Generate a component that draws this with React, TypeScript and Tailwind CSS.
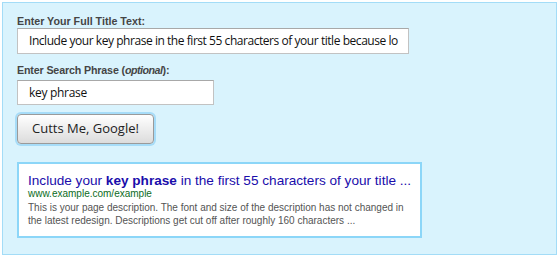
export default function App() {
  return (
    <div className="h-[257px] w-[560px] bg-white p-[2px]">
      <div className="h-[253px] w-[555px] border border-[#a3dcf7] bg-[#d9f3fd] px-[14px] pt-[12px]">
        <label className="block font-['Liberation_Sans',Arial,sans-serif] text-[10.7px] font-bold leading-[13px] text-[#454545]">
          Enter Your Full Title Text:
        </label>
        <div className="flex h-[26px] w-[392px] items-center overflow-hidden whitespace-nowrap border border-[#c2c2c2] border-t-[#a8a8a8] bg-white px-[11px] font-['Open_Sans',sans-serif] text-[12px] tracking-[-0.45px] text-[#111]">
          Include your key phrase in the first 55 characters of your title because lo
        </div>

        <label className="mt-[10px] block font-['Liberation_Sans',Arial,sans-serif] text-[10.7px] font-bold leading-[13px] tracking-[-0.15px] text-[#454545]">
          Enter Search Phrase (<em className="tracking-[-0.5px]">optional</em>):
        </label>
        <div className="mt-[3px] flex h-[25px] w-[197px] items-center border border-[#c2c2c2] border-t-[#a8a8a8] bg-white px-[11px] font-['Open_Sans',sans-serif] text-[12px] tracking-[-0.3px] text-[#111]">
          key phrase
        </div>

        <button className="mt-[9px] flex h-[30px] w-[137px] items-center justify-center rounded-[4px] border border-[#9a9a9a] bg-gradient-to-b from-white to-[#dcdcdc] font-['Open_Sans',sans-serif] text-[13px] text-[#222] shadow-[0_0_0_2px_#a6dcf8]">
          Cutts Me, Google!
        </button>

        <div className="mt-[18px] h-[76px] w-[405px] border-2 border-[#8cd6f8] bg-white px-[9px] pt-[9px] font-['Liberation_Sans',Arial,sans-serif]">
          <div className="whitespace-nowrap text-[13.6px] leading-[15px] text-[#1a0dab]">
            Include your <b>key phrase</b> in the first 55 characters of your title ...
          </div>
          <div className="text-[10px] leading-[12px] text-[#0b6b23]">www.example.com/example</div>
          <div className="mt-[1px] text-[10px] leading-[13px] text-[#545454]">
            This is your page description. The font and size of the description has not changed in the latest redesign. Descriptions get cut off after roughly 160 characters ...
          </div>
        </div>
      </div>
    </div>
  );
}
